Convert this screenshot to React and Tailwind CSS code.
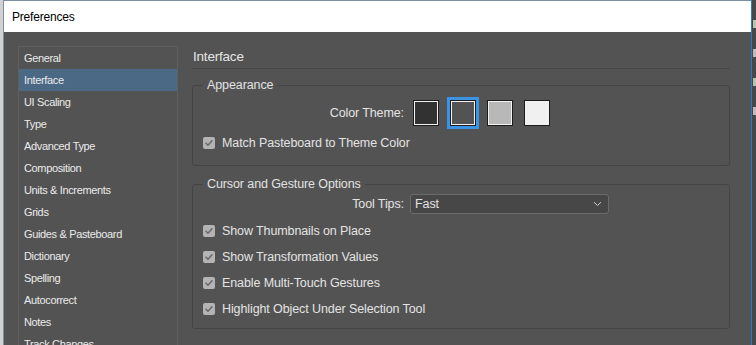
import React from 'react';

const sections = [
  'General',
  'Interface',
  'UI Scaling',
  'Type',
  'Advanced Type',
  'Composition',
  'Units & Increments',
  'Grids',
  'Guides & Pasteboard',
  'Dictionary',
  'Spelling',
  'Autocorrect',
  'Notes',
  'Track Changes',
];

const themes = [
  { fill: 'bg-[#323232]', selected: false },
  { fill: 'bg-[#535353]', selected: true },
  { fill: 'bg-[#b8b8b8]', selected: false },
  { fill: 'bg-[#f0f0f0]', selected: false },
];

const Checkbox = ({ label }) => (
  <div className="flex items-center h-[26px] pl-[10px]">
    <span className="w-[12px] h-[12px] rounded-[2px] bg-[#b4b4b4] flex items-center justify-center">
      <svg width="10" height="10" viewBox="0 0 10 10" fill="none">
        <path d="M2 5.2l2 2 4-4.4" stroke="#6a6a6a" strokeWidth="1.6" strokeLinecap="round" strokeLinejoin="round" />
      </svg>
    </span>
    <span className="ml-[7px]">{label}</span>
  </div>
);

const Group = ({ title, children, className = '' }) => (
  <fieldset className={`border border-[#444444] rounded-[3px] ${className}`}>
    <legend className="ml-[10px] px-[4px] text-[12.5px] leading-[17px] text-[#e2e2e2]">{title}</legend>
    {children}
  </fieldset>
);

const App = () => {
  return (
    <div
      className="w-[756px] h-[345px] overflow-hidden flex bg-[#cacaca]"
      style={{ fontFamily: '"Liberation Sans", Arial, sans-serif' }}
    >
      {/* desktop behind the dialog */}
      <div className="w-[3px] shrink-0 bg-[#d2d2d2]" />

      {/* dialog window */}
      <div className="w-[748px] shrink-0 flex flex-col border-l border-t border-[#7c8ea3]">
        <div className="h-[31px] shrink-0 bg-white flex items-center pl-[8px] text-[12px] text-black tracking-[-0.2px]">
          Preferences
        </div>

        <div className="flex-1 min-h-0 overflow-hidden bg-[#535353] flex pt-[14px] pl-[14px] text-[#e3e3e3]">
          {/* section list */}
          <div className="w-[160px] shrink-0 border border-b-0 border-[#5f5f5f] text-[11px] tracking-[-0.35px] text-[#ebebeb]">
            {sections.map((name) => (
              <div
                key={name}
                className={`h-[22px] flex items-center pl-[5px] ${
                  name === 'Interface' ? 'bg-[#4b6885]' : ''
                }`}
              >
                {name}
              </div>
            ))}
          </div>

          {/* settings panel */}
          <div className="ml-[14px] w-[538px] shrink-0 text-[12.5px] tracking-[-0.1px]">
            <div className="h-[23px] flex items-center pl-[1px] border-b border-[#474747] text-[13.5px] tracking-[-0.2px] text-[#e6e6e6]">
              Interface
            </div>

            <Group title="Appearance" className="mt-[8px] pb-[9px]">
              <div className="flex items-center h-[26px] mt-[6px]">
                <span className="w-[211px] text-right">Color Theme:</span>
                <div className="flex gap-[11px] ml-[9px]">
                  {themes.map((t, i) => (
                    <span
                      key={i}
                      className={`w-[26px] h-[26px] border border-[#1c1c1c] ${
                        t.selected ? 'ring-3 ring-[#3a93e4]' : ''
                      }`}
                    >
                      <span className={`block w-full h-full border border-[#f2f2f2] ${t.fill}`} />
                    </span>
                  ))}
                </div>
              </div>
              <div className="mt-[4px]">
                <Checkbox label="Match Pasteboard to Theme Color" />
              </div>
            </Group>

            <Group title="Cursor and Gesture Options" className="mt-[10px] pb-[6px]">
              <div className="flex items-center mt-[1px]">
                <span className="w-[211px] text-right">Tool Tips:</span>
                <div className="ml-[6px] w-[199px] h-[20px] flex items-center justify-between pl-[4px] pr-[6px] bg-[#474747] border border-[#6b6b6b] rounded-[3px]">
                  <span>Fast</span>
                  <svg width="9" height="6" viewBox="0 0 9 6" fill="none">
                    <path d="M1 1.2l3.5 3.3L8 1.2" stroke="#cfcfcf" strokeWidth="1" />
                  </svg>
                </div>
              </div>
              <div className="mt-[4px]">
                <Checkbox label="Show Thumbnails on Place" />
                <Checkbox label="Show Transformation Values" />
                <Checkbox label="Enable Multi-Touch Gestures" />
                <Checkbox label="Highlight Object Under Selection Tool" />
              </div>
            </Group>

            <Group title="Panels" className="mt-[13px] h-[40px]" />
          </div>
        </div>
      </div>

      {/* window edge and app behind */}
      <div className="w-px shrink-0 bg-[#1f7fd8]" />
      <div className="flex-1 bg-[#474747] flex flex-col gap-[21px] pt-[20px] pl-[1px]">
        <span className="block w-[3px] h-[8px] bg-[#b9c3b0]" />
        <span className="block w-[3px] h-[8px] bg-[#c3b9bd]" />
        <span className="block w-[3px] h-[8px] bg-[#b9c3b0]" />
        <span className="block w-[3px] h-[8px] bg-[#c3b9bd]" />
      </div>
    </div>
  );
};

export default App;
